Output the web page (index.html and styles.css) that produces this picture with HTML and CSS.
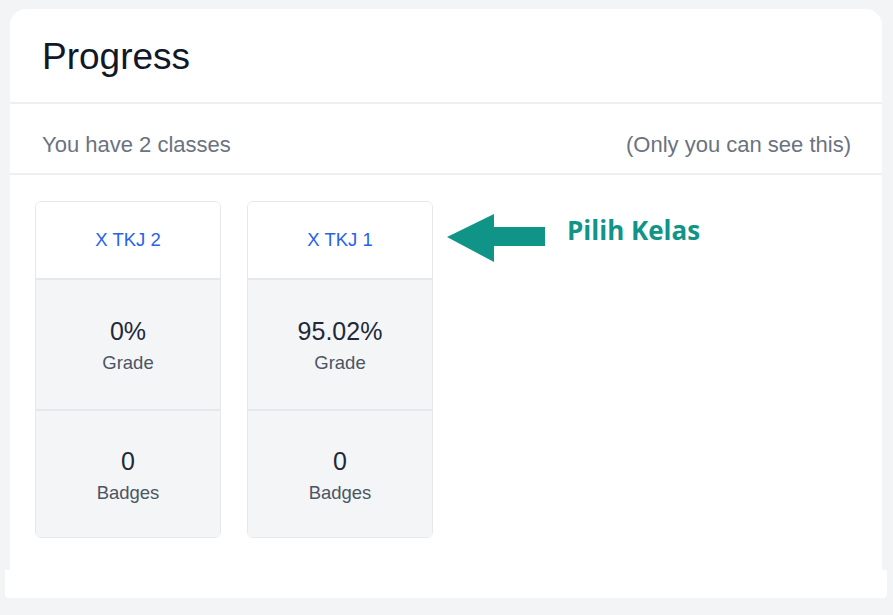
FILE: index.html
```html
<!DOCTYPE html>
<html lang="en">
<head>
    <meta charset="UTF-8">
    <meta name="viewport" content="width=device-width, initial-scale=1.0">
    <title>Progress</title>
    <link rel="stylesheet" href="styles.css">
</head>
<body>
    <div class="panel">
        <div class="panel-head">
            <h1>Progress</h1>
        </div>
        <div class="panel-sub">
            <span>You have 2 classes</span>
            <span>(Only you can see this)</span>
        </div>
        <div class="panel-body">
            <div class="class-card">
                <a href="#" class="class-name">X TKJ 2</a>
                <div class="stat">
                    <div class="stat-value">0%</div>
                    <div class="stat-label">Grade</div>
                </div>
                <div class="stat">
                    <div class="stat-value">0</div>
                    <div class="stat-label">Badges</div>
                </div>
            </div>
            <div class="class-card">
                <a href="#" class="class-name">X TKJ 1</a>
                <div class="stat">
                    <div class="stat-value">95.02%</div>
                    <div class="stat-label">Grade</div>
                </div>
                <div class="stat">
                    <div class="stat-value">0</div>
                    <div class="stat-label">Badges</div>
                </div>
            </div>
            <!-- petunjuk -->
            <div class="hint">
                <svg class="hint-arrow" width="100" height="50" viewBox="0 0 100 50">
                    <polygon points="0,25 47,2 47,15 98,15 98,34 47,34 47,50" fill="#119488"/>
                </svg>
                <span class="hint-text">Pilih Kelas</span>
            </div>
        </div>
    </div>
    <div class="panel-foot"></div>
</body>
</html>
```

FILE: styles.css
```css
body {
    margin: 0;
    padding: 9px 0 0 0;
    background: #f3f4f6;
    font-family: "Liberation Sans", Arial, sans-serif;
}

.panel {
    margin: 0 11px 0 10px;
    background: white;
    border-radius: 16px 16px 0 0;
}

.panel-head {
    height: 93px;
    border-bottom: 2px solid #eeeff1;
    padding: 0 32px;
    display: flex;
    align-items: center;
}

.panel-head h1 {
    margin: 0 0 -2px 0;
    font-size: 37px;
    font-weight: normal;
    color: #111827;
}

.panel-sub {
    height: 57px;
    border-bottom: 2px solid #eeeff1;
    padding: 12px 31px 0 32px;
    display: flex;
    justify-content: space-between;
    align-items: center;
    font-size: 22px;
    color: #6b7280;
}

.panel-body {
    display: flex;
    gap: 27px;
    padding: 26px 25px 32px 25px;
}

.class-card {
    width: 184px;
    border: 1px solid #e7e8eb;
    border-radius: 6px;
    overflow: hidden;
    display: flex;
    flex-direction: column;
}

.class-card:first-child {
    margin-right: -1px;
}

.class-name {
    height: 76px;
    display: flex;
    align-items: center;
    justify-content: center;
    background: white;
    color: #2563eb;
    font-size: 18.5px;
    text-decoration: none;
    border-bottom: 2px solid #e7e8eb;
}

.stat {
    height: 127px;
    padding-top: 2px;
    background: #f4f5f7;
    display: flex;
    flex-direction: column;
    align-items: center;
    justify-content: center;
    gap: 6px;
}

.stat + .stat {
    border-top: 2px solid #e7e8eb;
    height: 124px;
}

.stat-value {
    font-size: 25px;
    color: #1f2937;
}

.stat-label {
    font-size: 18.5px;
    color: #4b5563;
}

.hint {
    display: flex;
    align-items: center;
    gap: 20px;
    margin-top: 11px;
    height: 50px;
    align-self: flex-start;
    margin-left: -13px;
}

.hint-text {
    font-family: "Open Sans", sans-serif;
    font-weight: bold;
    font-size: 26px;
    color: #119488;
    margin-top: -14px;
}

.panel-foot {
    margin: 0 6px 0 5px;
    height: 28px;
    background: white;
    border-radius: 0 0 4px 4px;
}
```
